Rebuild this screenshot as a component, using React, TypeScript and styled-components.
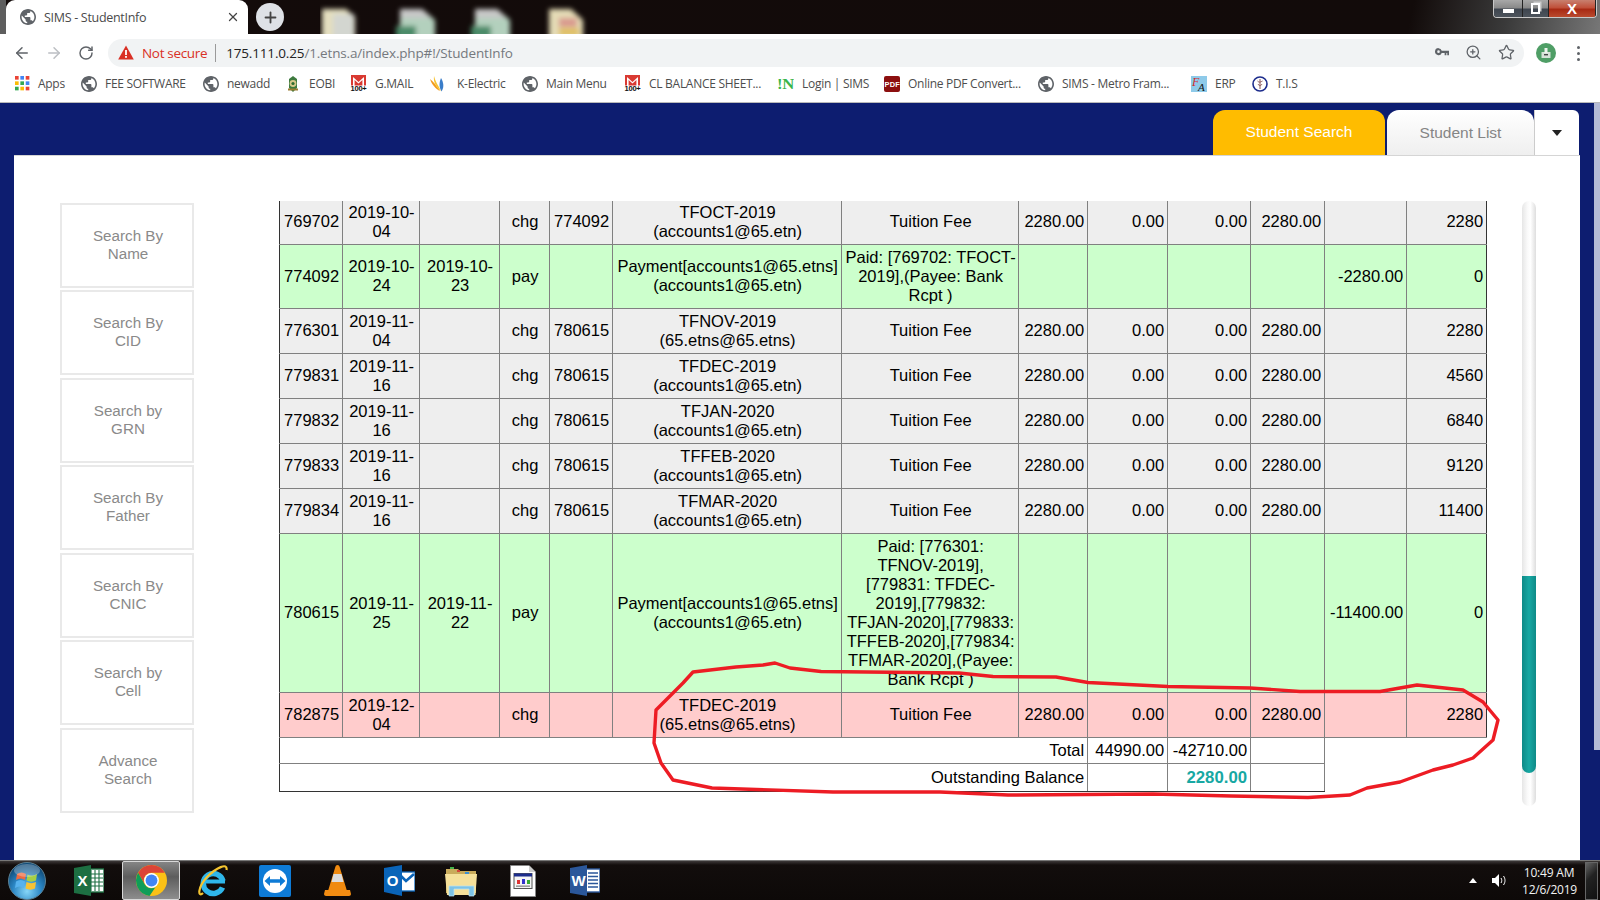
import React from "react";
import styled, { createGlobalStyle } from "styled-components";
import { ArrowLeft, ArrowRight, RotateCw, ZoomIn, Star, X, Plus } from "lucide-react";

const Global = createGlobalStyle`
  html, body { margin: 0; padding: 0; background: #fff; }
  * { box-sizing: border-box; }
`;

const Page = styled.div`
  width: 1600px; height: 900px; overflow: hidden; display: flex; flex-direction: column; position: relative;
  font-family: "Liberation Sans", Arial, sans-serif;
`;

/* ---------- browser chrome ---------- */
const TabStrip = styled.div`
  height: 34px; display: flex; align-items: flex-start; flex: none;
  background: linear-gradient(102deg, #130b0a 0%, #120b0a 88%, #3a3a3a 94%, #777 100%);
`;
const EdgeGrey = styled.div`width: 6px; height: 34px; background: #5e5e5e;`;
const BrowserTab = styled.div`
  width: 242px; height: 34px; background: #fff; border-radius: 9px 9px 0 0; display: flex; align-items: center;
  padding: 0 8px 0 14px; gap: 8px; color: #4a4a4a;
  font: 12.5px "Open Sans", sans-serif; letter-spacing: -0.3px;
`;
const TabTitle = styled.span`flex: 1; white-space: nowrap;`;
const NewTabButton = styled.div`
  width: 28px; height: 28px; border-radius: 50%; background: #dee1e6; margin: 3px 0 0 8px; display: flex;
  align-items: center; justify-content: center; color: #444;
`;
const BlurSvg = styled.svg`margin-left: 36px; flex: none;`;
const WindowControls = styled.div`
  margin-left: auto; margin-right: 3px; width: 104px; height: 18px; display: flex; border: 1px solid #c8c8c8; border-top: 0;
  border-radius: 0 0 4px 4px; overflow: hidden;
`;
const WinBtn = styled.div<{ $w: number; $red?: boolean }>`
  width: ${p => p.$w}px; display: flex; align-items: center; justify-content: center; color: #fff;
  border-right: 1px solid #222;
  background: ${p => p.$red
    ? "linear-gradient(#c8806f 0%, #c0503a 45%, #a82a14 55%, #b94a2e 100%)"
    : "linear-gradient(#a8a8a8 0%, #8a8a8a 45%, #3f4650 55%, #4d545c 100%)"};
`;
const MinGlyph = styled.div`width: 11px; height: 4px; background: #fff; margin-top: 4px;`;
const MaxGlyph = styled.div`
  width: 9px; height: 11px; border: 2px solid #fff; box-shadow: 2px -2px 0 -0.5px #ccc;
`;
const CloseGlyph = styled.span`font: bold 15px "Liberation Sans", sans-serif; color: #fff; line-height: 1;`;

const Toolbar = styled.div`
  height: 34px; background: #fff; display: flex; align-items: center; flex: none;
`;
const NavIcon = styled.div<{ $w: number; $c?: string }>`
  width: ${p => p.$w}px; margin-top: 3px; display: flex; justify-content: center; color: ${p => p.$c || "#5f6368"};
`;
const Omnibox = styled.div`
  width: 1416px; height: 28px; border-radius: 14px; background: #f1f3f4; display: flex; align-items: center;
  padding-left: 10px; font: 13.5px "Open Sans", sans-serif; letter-spacing: -0.33px; margin-top: 3px;
`;
const NotSecure = styled.span`color: #d93025; margin-left: 8px;`;
const Divider = styled.div`width: 1px; height: 18px; background: #9a9a9a; margin: 0 10px 0 8px;`;
const UrlHost = styled.span`color: #222; letter-spacing: -0.16px;`;
const UrlRest = styled.span`color: #75797e; letter-spacing: -0.16px;`;
const OmniRight = styled.div`margin-left: auto; display: flex; align-items: center; gap: 16px; padding-right: 9px; color: #5f6368;`;
const Avatar = styled.div`margin-left: 12px; display: flex; margin-top: 4px;`;
const Dots = styled.div`
  margin-left: 21px; margin-top: 4px; display: flex; flex-direction: column; gap: 3px;
  & > i { display: block; width: 3px; height: 3px; border-radius: 50%; background: #5f6368; }
`;

const BookmarkBar = styled.div`
  height: 35px; background: #fff; border-bottom: 1px solid #b9b9b9; display: flex; align-items: center; flex: none; padding: 0 0 3px 15px;
`;
const Bookmark = styled.div<{ $w: number }>`
  width: ${p => p.$w}px; flex: none; display: flex; align-items: center; gap: 8px; white-space: nowrap;
  font: 12px "Open Sans", sans-serif; letter-spacing: -0.28px; color: #4d4d4d;
`;

/* ---------- application ---------- */
const Main = styled.div`
  flex: 1; display: flex; min-height: 0;
  background: #0d1d70;
`;
const MainColumn = styled.div`width: 1594px; display: flex; flex-direction: column;`;
const SideStrip = styled.div`width: 6px; background: linear-gradient(#b4bbd6 0, #b4bbd6 647px, #0d1d70 647px);`;
const TabsRow = styled.div`
  height: 52px; padding: 7px 15px 0 0; display: flex; justify-content: flex-end; flex: none; font-size: 15.5px;
`;
const SearchTab = styled.div`
  width: 172px; background: #ffbc00; color: #fff; border-radius: 12px 12px 0 0; display: flex; align-items: center; justify-content: center; padding-bottom: 2px;
`;
const ListTab = styled.div`
  width: 147px; margin-left: 2px; background: linear-gradient(#fff, #efefef); color: #858585; border-radius: 12px 12px 0 0; display: flex;
  align-items: center; justify-content: center; padding-top: 1px;
`;
const CaretTab = styled.div`
  width: 45px; background: #fff; border-left: 1px solid #ccc; border-radius: 0 6px 0 0; display: flex; align-items: center; justify-content: center;
  &::after { content: ""; border: 5.5px solid transparent; border-top: 6px solid #222; border-bottom: 0; }
`;
const Panel = styled.div`
  flex: 1; margin-left: 14px; width: 1566px; background: #fff; border-top: 1px solid #d5d5d5; display: flex; padding-top: 45px; min-height: 0;
`;
const Sidebar = styled.div`
  margin-left: 46px; margin-top: 2px; width: 134px; display: flex; flex-direction: column; gap: 2.45px; flex: none;
`;
const SearchButton = styled.div`
  height: 85px; border: 2px solid #e9e9e9; color: #8a8a8a; font-size: 15.2px; line-height: 18px; text-align: center;
  display: flex; align-items: center; justify-content: center; padding: 0 21px 1px 23px;
`;
const TableViewport = styled.div`
  margin-left: 84.6px; width: 1208px; height: 605px; overflow: hidden; flex: none;
`;
const Ledger = styled.table`
  width: 1207px; margin-top: -2px; table-layout: fixed; border-collapse: collapse; font-size: 16.5px; line-height: 19px; color: #000;
`;
const Cell = styled.td<{ $a?: "l" | "c" | "r"; $nw?: boolean }>`
  border: 1px solid #808080; padding: 2.5px 2.5px 3.5px 4.5px;
  text-align: ${p => (p.$a === "r" ? "right" : p.$a === "l" ? "left" : "center")};
  ${p => (p.$nw ? "white-space: nowrap; padding-left: 3.5px; padding-right: 1.5px;" : "")}
  &:first-child { border-left-color: #333; }
  &:last-child { border-right-color: #333; }
`;
const Row = styled.tr<{ $k: "g" | "p" | "r" }>`
  background: ${p => (p.$k === "g" ? "#eeeeee" : p.$k === "p" ? "#ccffcc" : "#ffcccc")};
`;
const SumCell = styled.td<{ $last?: boolean }>`
  border: 1px solid #808080; padding: 3px 2.5px 3px 4.5px; text-align: right; background: #fff;
  &:first-child { border-left-color: #333; }
  ${p => p.$last ? "border-bottom-color: #333; padding-top: 4px; padding-bottom: 4px;" : ""}
`;
const OutstandingValue = styled.b`color: #17a8a3; font-size: 16.8px;`;
const ScrollTrack = styled.div`
  margin-left: 35.5px; width: 13.5px; height: 605px; border-radius: 7px; overflow: hidden; flex: none; margin-top: 0;
  background: linear-gradient(90deg, #e6e6e6, #fafafa 40%, #fff 60%, #dedede);
`;
const ScrollThumb = styled.div`
  margin-top: 375px; height: 197px; background: linear-gradient(90deg, #0e8a87, #17a8a3 50%, #0e8a87); border-radius: 0 0 7px 7px;
`;

/* ---------- taskbar ---------- */
const Taskbar = styled.div`
  height: 40px; flex: none; display: flex; align-items: center; color: #fff; border-top: 1px solid #777;
  background: linear-gradient(#3c3838 0, #120d0c 4px, #0d0908 100%);
`;
const StartSlot = styled.div`width: 58px; display: flex; justify-content: center; margin-left: -2px;`;
const TaskSlot = styled.div<{ $active?: boolean; $first?: boolean }>`
  width: 58px; height: 39px; margin: 0 2px 0 ${p => (p.$first ? "4px" : "2px")}; display: flex; align-items: center; justify-content: center;
  ${p => p.$active ? "background: linear-gradient(#858585, #5d5d5d 40%, #8d8d8d); border: 1px solid #d8d8d8; border-radius: 2px;" : ""}
`;
const Tray = styled.div`margin-left: auto; display: flex; align-items: center;`;
const TrayUp = styled.div`
  border: 4px solid transparent; border-bottom: 5px solid #fff; border-top: 0; margin-right: 15px;
`;
const Clock = styled.div`
  font: 12px/17px "Open Sans", sans-serif; letter-spacing: -0.2px; text-align: center; margin-left: 15px; width: 54px; color: #f3f3f3;
`;
const ShowDesktop = styled.div`
  width: 13px; height: 38px; margin: 0 2px 0 9px; border: 1px solid #666; background: linear-gradient(135deg, #666, #222 40%, #111);
`;
const AnnotationLayer = styled.svg`position: absolute; left: 0; top: 0; pointer-events: none;`;

/* ---------- drawings ---------- */
const Globe = ({ s = 16 }: { s?: number }) => (
  <svg width={s} height={s} viewBox="2 2 20 20" fill="#5f6368">
    <path d="M12 2C6.48 2 2 6.48 2 12s4.48 10 10 10 10-4.48 10-10S17.52 2 12 2zm-1 17.93c-3.95-.49-7-3.85-7-7.93 0-.62.08-1.21.21-1.79L9 15v1c0 1.1.9 2 2 2v1.93zm6.9-2.54c-.26-.81-1-1.39-1.9-1.39h-1v-3c0-.55-.45-1-1-1H8v-2h2c.55 0 1-.45 1-1V7h2c1.1 0 2-.9 2-2v-.41c2.93 1.19 5 4.06 5 7.41 0 2.08-.8 3.97-2.1 5.39z" />
  </svg>
);
const AppsGrid = () => {
  const c = ["#ea4335", "#4285f4", "#ea4335", "#fbbc05", "#34a853", "#4285f4", "#34a853", "#fbbc05", "#ea4335"];
  return (
    <svg width="15" height="15" viewBox="0 0 14 14">
      {c.map((f, i) => <rect key={i} x={(i % 3) * 5} y={Math.floor(i / 3) * 5} width="3.4" height="3.4" fill={f} />)}
    </svg>
  );
};
const Warn = () => (
  <svg width="16" height="15" viewBox="0 0 16 15">
    <path d="M8 0.5 L15.8 14.5 H0.2 Z" fill="#d93025" />
    <rect x="7.1" y="5" width="1.8" height="5" fill="#fff" /><rect x="7.1" y="11" width="1.8" height="1.8" fill="#fff" />
  </svg>
);
const KeyIcon = () => (
  <svg width="14" height="9" viewBox="0 0 16 10" fill="#5f6368">
    <path d="M4 0a4 4 0 1 0 3.7 5.5H11V8h2V5.5h1V8h2V3H7.7A4 4 0 0 0 4 0zm0 2.5a1.5 1.5 0 1 1 0 3 1.5 1.5 0 0 1 0-3z" />
  </svg>
);
const ProfileIcon = () => (
  <svg width="20" height="20" viewBox="0 0 20 20">
    <circle cx="10" cy="10" r="10" fill="#4f9e66" />
    <rect x="5.5" y="9" width="9" height="6" fill="#d6e2d8" />
    <rect x="8.5" y="5" width="3" height="5" fill="#eef3ee" /><rect x="8" y="11" width="4" height="1.4" fill="#444" />
  </svg>
);
const GmailBadge = () => (
  <svg width="17" height="18" viewBox="0 0 17 18">
    <path d="M1 0h15v11H1z" fill="#d93a32" />
    <path d="M3 2 L8.5 7 L14 2 V11 H12.4 V5 L8.5 8.6 L4.6 5 V11 H3 Z" fill="#fff" />
    <rect x="0" y="10.5" width="17" height="7.5" fill="#fff" />
    <text x="8.5" y="16.4" textAnchor="middle" fontSize="7.6" fontWeight="bold" fontFamily="Liberation Sans" fill="#111" textLength="16">100+</text>
  </svg>
);
const EobiIcon = () => (
  <svg width="16" height="16" viewBox="0 0 16 16">
    <path d="M8 0 L12 3 V12 L8 16 L4 12 V3Z" fill="#3d7a3e" />
    <circle cx="8" cy="7.5" r="3.4" fill="#d7c88a" /><circle cx="8" cy="7.5" r="1.6" fill="#2e6b2f" />
    <rect x="3" y="12.5" width="10" height="2" fill="#9a7d33" />
  </svg>
);
const KElectricIcon = () => (
  <svg width="20" height="17" viewBox="0 0 20 17">
    <path d="M1 4 C4 6 7 10 11 16 C7 14 3 10 1 4Z" fill="#f39a1e" />
    <path d="M5 1 C6 6 9 10 12 16 C8 13 4 8 5 1Z" fill="#f7c331" />
    <path d="M12 3 C10 8 10 12 12.5 16.5 C15 13 15 8 12 3Z" fill="#3a7dc9" />
  </svg>
);
const LoginIcon = () => (
  <svg width="17" height="19" viewBox="0 0 17 19">
    <text x="0" y="15" fontSize="15" fontWeight="bold" fontFamily="Liberation Serif" fill="#39b54a" textLength="17" lengthAdjust="spacingAndGlyphs">!N</text>
  </svg>
);
const PdfIcon = () => (
  <svg width="16" height="16" viewBox="0 0 16 16">
    <rect width="16" height="16" rx="2" fill="#8c0f0f" />
    <text x="8" y="11.2" textAnchor="middle" fontSize="7.4" fontWeight="bold" fontFamily="Liberation Sans" fill="#fff" textLength="15">PDF</text>
  </svg>
);
const FaIcon = () => (
  <svg width="16" height="16" viewBox="0 0 16 16">
    <rect width="16" height="16" fill="#8ecae9" />
    <text x="1" y="10" fontSize="12" fontStyle="italic" fontFamily="Liberation Serif" fill="#d4282c">F</text>
    <text x="7" y="15" fontSize="11" fontStyle="italic" fontFamily="Liberation Serif" fill="#111">A</text>
  </svg>
);
const TisIcon = () => (
  <svg width="16" height="16" viewBox="0 0 16 16">
    <circle cx="8" cy="8" r="7" fill="#fff" stroke="#1c2c8c" strokeWidth="1.6" />
    <path d="M8 3v10M5.5 5c2 2 3 1 5 0M6 8c1 2 3 2 4 0" stroke="#885555" strokeWidth="1" fill="none" />
  </svg>
);
const WindowsOrb = () => (
  <svg width="38" height="38" viewBox="0 0 38 38">
    <defs>
      <radialGradient id="orb" cx="50%" cy="78%" r="70%">
        <stop offset="0" stopColor="#86d6f8" /><stop offset="0.55" stopColor="#2b86c4" /><stop offset="1" stopColor="#0f4a78" />
      </radialGradient>
    </defs>
    <circle cx="19" cy="19" r="18.5" fill="url(#orb)" stroke="#5b7f92" />
    <path d="M9 12 C12 10 15 10 18 12 L17 18 C14 16 11 16 8 18Z" fill="#ee6a40" />
    <path d="M19.5 12.5 C22 14 25 14 29 12 L28 18.5 C25 20 21.5 20 18.5 18.5Z" fill="#a6cf45" />
    <path d="M8 19.5 C11 17.5 14 17.5 17 19.5 L16 26 C13 24 10 24 7 26Z" fill="#57b2ee" />
    <path d="M18.5 20 C21.5 21.5 25 21.5 28 20 L27 26.5 C24 28 20.5 28 17.5 26.5Z" fill="#f7c233" />
    <ellipse cx="19" cy="8.5" rx="13" ry="6.5" fill="#fff" opacity="0.28" />
  </svg>
);
const ExcelIcon = () => (
  <svg width="30" height="31" viewBox="0 0 30 31">
    <rect x="13" y="4" width="17" height="23" fill="#fff" stroke="#1d6f42" strokeWidth="1.4" />
    <path d="M17 5v21M21 5v21M25 5v21M14 9h15M14 13h15M14 17h15M14 21h15" stroke="#1d6f42" strokeWidth="1.1" />
    <path d="M0 3 L17 0 V31 L0 28Z" fill="#1d6f42" />
    <text x="8.5" y="21" textAnchor="middle" fontSize="15" fontWeight="bold" fontFamily="Liberation Sans" fill="#fff">X</text>
  </svg>
);
const ChromeIcon = () => (
  <svg width="31" height="31" viewBox="-15.5 -15.5 31 31">
    <circle r="15.5" fill="#fbc116" />
    <path d="M-13.4 -7.75 A15.5 15.5 0 0 1 13.4 -7.75 L0 -7.75 A7.75 7.75 0 0 0 -6.7 3.9 Z" fill="#db4437" />
    <path d="M-13.4 -7.75 L-6.7 3.9 A7.75 7.75 0 0 0 3.9 6.7 L-2 15.4 A15.5 15.5 0 0 1 -13.4 -7.75Z" fill="#0f9d58" />
    <circle r="7.4" fill="#fff" /><circle r="5.9" fill="#4285f4" />
  </svg>
);
const IeIcon = () => (
  <svg width="30" height="32" viewBox="0 0 30 32">
    <path d="M24.5 22.5 A10 10 0 1 1 25 16" fill="none" stroke="#2fb6ea" strokeWidth="5.5" />
    <path d="M7 16.5 H27" stroke="#2fb6ea" strokeWidth="4" />
    <path d="M5 28 C0 33 -1 23 9 12 C18 3 30 -3 28.5 5" fill="none" stroke="#f4c430" strokeWidth="2.2" />
  </svg>
);
const TeamViewerIcon = () => (
  <svg width="32" height="32" viewBox="0 0 32 32">
    <rect width="32" height="32" rx="2" fill="#0e7bd6" />
    <circle cx="16" cy="16" r="12" fill="#fff" />
    <path d="M5.5 16 L11 11 V14.3 H21 V11 L26.5 16 L21 21 V17.7 H11 V21Z" fill="#0e7bd6" />
  </svg>
);
const VlcIcon = () => (
  <svg width="27" height="31" viewBox="0 0 27 31">
    <path d="M13.5 0 C15 0 15.5 1 16 3 L23 26 H4 L11 3 C11.5 1 12 0 13.5 0Z" fill="#f08a10" />
    <path d="M9.5 9 H17.5 L19.5 17 H7.5Z" fill="#dcdcdc" />
    <path d="M1 25 H26 L27 29 C27 30 26 31 25 31 H2 C1 31 0 30 0 29Z" fill="#f28c12" />
  </svg>
);
const OutlookIcon = () => (
  <svg width="31" height="31" viewBox="0 0 31 31">
    <rect x="14" y="7" width="17" height="19" fill="#fff" stroke="#0a64b8" strokeWidth="1.3" />
    <path d="M15 9 L22 16 L30 9" fill="none" stroke="#0a64b8" strokeWidth="2.6" />
    <path d="M0 3 L18 0 V31 L0 27Z" fill="#0a64b8" />
    <text x="8.5" y="21" textAnchor="middle" fontSize="15" fontWeight="bold" fontFamily="Liberation Sans" fill="#fff">O</text>
  </svg>
);
const ExplorerIcon = () => (
  <svg width="32" height="32" viewBox="0 0 32 32">
    <path d="M1 4 H13 L15 6 H31 V28 H1Z" fill="#c9ab5b" />
    <rect x="5" y="2" width="4" height="2" fill="#43b14b" /><rect x="12" y="5" width="3" height="2" fill="#d5453a" /><rect x="20" y="7" width="4" height="2" fill="#3b8fd1" />
    <path d="M0 9 H32 L30.5 30 H2Z" fill="#f5e09a" />
    <path d="M4 21 H29 V31 H24 V24 H9 V31 H4Z" fill="#7dc3e6" stroke="#bfe4f4" strokeWidth="0.7" />
  </svg>
);
const DocAppIcon = () => (
  <svg width="26" height="32" viewBox="0 0 26 32">
    <path d="M0.5 0.5 H19 L25.5 7 V31.5 H0.5Z" fill="#fff" stroke="#888" />
    <path d="M19 0.5 V7 H25.5Z" fill="#ccc" />
    <rect x="4" y="8.5" width="18" height="15" fill="#f5f5f5" stroke="#555" />
    <rect x="4" y="8.5" width="18" height="3" fill="#1c2c8c" />
    <rect x="7" y="15" width="3" height="4" fill="#d33" /><rect x="12" y="14" width="3" height="5" fill="#33c" /><rect x="17" y="15" width="3" height="4" fill="#3a3" />
    <rect x="6" y="20.5" width="14" height="1.3" fill="#888" />
  </svg>
);
const WordIcon = () => (
  <svg width="30" height="31" viewBox="0 0 30 31">
    <rect x="13" y="4" width="17" height="23" fill="#fff" stroke="#2b579a" strokeWidth="1.4" />
    <path d="M18 8h10M18 11.5h10M18 15h10M18 18.5h10M18 22h10" stroke="#2b579a" strokeWidth="1.5" />
    <path d="M0 3 L17 0 V31 L0 28Z" fill="#2b579a" />
    <text x="8.5" y="21" textAnchor="middle" fontSize="15" fontWeight="bold" fontFamily="Liberation Sans" fill="#fff">W</text>
  </svg>
);
const SpeakerIcon = () => (
  <svg width="15" height="15" viewBox="0 0 15 15" fill="none">
    <path d="M0 5 H3 L7 1 V14 L3 10 H0Z" fill="#fff" />
    <path d="M9 5 C10 6.5 10 8.5 9 10M11.5 3 C13.5 6 13.5 9 11.5 12" stroke="#fff" strokeWidth="1" />
  </svg>
);
const DesktopBlur = () => (
  <BlurSvg width="280" height="34" viewBox="0 0 280 34">
    <defs><filter id="b" x="-30%" y="-30%" width="160%" height="160%"><feGaussianBlur stdDeviation="2.4" /></filter></defs>
    <g filter="url(#b)">
      <path d="M2 9 H26 L35 17 V40 H2Z" fill="#e4dfbf" /><rect x="13" y="14" width="21" height="26" fill="#d3d6d0" />
      <path d="M80 9 H102 L115 20 V40 H80Z" fill="#b3d0bd" /><path d="M80 9 H102 L112 18 H80Z" fill="#c8c8c8" /><rect x="76" y="26" width="20" height="12" fill="#4a8a68" />
      <path d="M155 9 H177 L190 20 V40 H155Z" fill="#b3d0bd" /><path d="M155 9 H177 L187 18 H155Z" fill="#c8c8c8" /><rect x="151" y="26" width="20" height="12" fill="#4a8a68" />
      <path d="M229 9 H251 L263 20 V40 H229Z" fill="#e4dbb6" /><rect x="239" y="18" width="18" height="9" fill="#d99a8e" /><rect x="239" y="28" width="20" height="8" fill="#e0c060" />
    </g>
  </BlurSvg>
);

/* ---------- data ---------- */
type Rec = { id: string; d1: string; d2?: string; t: string; ref?: string; a: string; b: string; p: React.ReactNode; nw?: boolean; fee?: boolean; pay?: string; bal: string; k: "g" | "p" | "r" };
const rows: Rec[] = [
  { id: "769702", d1: "2019-10-04", t: "chg", ref: "774092", a: "TFOCT-2019", b: "(accounts1@65.etn)", p: "Tuition Fee", fee: true, bal: "2280", k: "g" },
  { id: "774092", d1: "2019-10-24", d2: "2019-10-23", t: "pay", a: "Payment[accounts1@65.etns]", b: "(accounts1@65.etn)", nw: true, p: <>Paid: [769702: TFOCT-<br />2019],(Payee: Bank<br />Rcpt )</>, pay: "-2280.00", bal: "0", k: "p" },
  { id: "776301", d1: "2019-11-04", t: "chg", ref: "780615", a: "TFNOV-2019", b: "(65.etns@65.etns)", p: "Tuition Fee", fee: true, bal: "2280", k: "g" },
  { id: "779831", d1: "2019-11-16", t: "chg", ref: "780615", a: "TFDEC-2019", b: "(accounts1@65.etn)", p: "Tuition Fee", fee: true, bal: "4560", k: "g" },
  { id: "779832", d1: "2019-11-16", t: "chg", ref: "780615", a: "TFJAN-2020", b: "(accounts1@65.etn)", p: "Tuition Fee", fee: true, bal: "6840", k: "g" },
  { id: "779833", d1: "2019-11-16", t: "chg", ref: "780615", a: "TFFEB-2020", b: "(accounts1@65.etn)", p: "Tuition Fee", fee: true, bal: "9120", k: "g" },
  { id: "779834", d1: "2019-11-16", t: "chg", ref: "780615", a: "TFMAR-2020", b: "(accounts1@65.etn)", p: "Tuition Fee", fee: true, bal: "11400", k: "g" },
  { id: "780615", d1: "2019-11-25", d2: "2019-11-22", t: "pay", a: "Payment[accounts1@65.etns]", b: "(accounts1@65.etn)", p: "Paid: [776301: TFNOV-2019],[779831: TFDEC-2019],[779832: TFJAN-2020],[779833: TFFEB-2020],[779834: TFMAR-2020],(Payee: Bank Rcpt )", pay: "-11400.00", bal: "0", k: "p" },
  { id: "782875", d1: "2019-12-04", t: "chg", a: "TFDEC-2019", b: "(65.etns@65.etns)", p: "Tuition Fee", fee: true, bal: "2280", k: "r" },
];
const widths = [63, 77, 80, 50, 63, 229, 177, 69, 80, 83, 74, 82, 80];
const searches = [["Search By", "Name"], ["Search By", "CID"], ["Search by", "GRN"], ["Search By", "Father"], ["Search By", "CNIC"], ["Search by", "Cell"], ["Advance", "Search"]];
const marks: [number, React.ReactNode, string][] = [
  [66, <AppsGrid />, "Apps"], [122, <Globe />, "FEE SOFTWARE"], [82, <Globe />, "newadd"], [65, <EobiIcon />, "EOBI"],
  [79, <GmailBadge />, "G.MAIL"], [93, <KElectricIcon />, "K-Electric"], [102, <Globe />, "Main Menu"],
  [153, <GmailBadge />, "CL BALANCE SHEET..."], [107, <LoginIcon />, "Login | SIMS"], [154, <PdfIcon />, "Online PDF Convert..."],
  [153, <Globe />, "SIMS - Metro Fram..."], [61, <FaIcon />, "ERP"], [60, <TisIcon />, "T.I.S"],
];
const annotation = "M1380 691.5 L1300 691.5 L1250 688 L1168 686.5 L1088 682.5 L1056 677 L993 676.5 L959 673 L821 671.5 L790 668 L775 663 L763 665 L736 667 L693 672 L683 683 L656 710 L654 743 L661 763 L673 780 L712 788 L833 792 L940 792 L1008 795 L1153 794 L1231 796 L1308 797.5 L1350 795 L1367 788 L1400 782 L1433 770 L1453 765 L1473 758 L1493 740 L1498 720 L1483 702 L1463 690 L1417 685 L1380 691.5";

export default function App() {
  return (
    <Page>
      <Global />
      <TabStrip>
        <EdgeGrey />
        <BrowserTab>
          <Globe />
          <TabTitle>SIMS - StudentInfo</TabTitle>
          <X size={14} strokeWidth={2.2} color="#444" />
        </BrowserTab>
        <NewTabButton><Plus size={17} strokeWidth={2.6} /></NewTabButton>
        <DesktopBlur />
        <WindowControls>
          <WinBtn $w={30}><MinGlyph /></WinBtn>
          <WinBtn $w={26}><MaxGlyph /></WinBtn>
          <WinBtn $w={48} $red><CloseGlyph>X</CloseGlyph></WinBtn>
        </WindowControls>
      </TabStrip>
      <Toolbar>
        <NavIcon $w={44}><ArrowLeft size={18} strokeWidth={2} /></NavIcon>
        <NavIcon $w={20} $c="#bcbfc3"><ArrowRight size={18} strokeWidth={2} /></NavIcon>
        <NavIcon $w={44}><RotateCw size={16} strokeWidth={2.2} /></NavIcon>
        <Omnibox>
          <Warn />
          <NotSecure>Not secure</NotSecure>
          <Divider />
          <UrlHost>175.111.0.25</UrlHost><UrlRest>/1.etns.a/index.php#!/StudentInfo</UrlRest>
          <OmniRight>
            <KeyIcon />
            <ZoomIn size={17} strokeWidth={1.8} />
            <Star size={17} strokeWidth={1.8} />
          </OmniRight>
        </Omnibox>
        <Avatar><ProfileIcon /></Avatar>
        <Dots><i /><i /><i /></Dots>
      </Toolbar>
      <BookmarkBar>
        {marks.map(([w, ic, t]) => <Bookmark key={t} $w={w}>{ic}<span>{t}</span></Bookmark>)}
      </BookmarkBar>
      <Main>
        <MainColumn>
          <TabsRow>
            <SearchTab>Student Search</SearchTab>
            <ListTab>Student List</ListTab>
            <CaretTab />
          </TabsRow>
          <Panel>
            <Sidebar>
              {searches.map(([a, b], i) => <SearchButton key={i}><span>{a}<br />{b}</span></SearchButton>)}
            </Sidebar>
            <TableViewport>
              <Ledger>
                <colgroup>{widths.map((w, i) => <col key={i} width={w} />)}</colgroup>
                <tbody>
                  {rows.map(r => (
                    <Row key={r.id} $k={r.k}>
                      <Cell $a="l">{r.id}</Cell>
                      <Cell>{r.d1}</Cell>
                      <Cell>{r.d2}</Cell>
                      <Cell>{r.t}</Cell>
                      <Cell>{r.ref}</Cell>
                      <Cell>{r.a}<br />{r.b}</Cell>
                      <Cell $nw={r.nw}>{r.p}</Cell>
                      <Cell $a="r">{r.fee ? "2280.00" : ""}</Cell>
                      <Cell $a="r">{r.fee ? "0.00" : ""}</Cell>
                      <Cell $a="r">{r.fee ? "0.00" : ""}</Cell>
                      <Cell $a="r">{r.fee ? "2280.00" : ""}</Cell>
                      <Cell $a="r">{r.pay}</Cell>
                      <Cell $a="r">{r.bal}</Cell>
                    </Row>
                  ))}
                  <tr>
                    <SumCell colSpan={8}>Total</SumCell>
                    <SumCell>44990.00</SumCell>
                    <SumCell>-42710.00</SumCell>
                    <SumCell />
                  </tr>
                  <tr>
                    <SumCell colSpan={8} $last>Outstanding Balance</SumCell>
                    <SumCell $last />
                    <SumCell $last><OutstandingValue>2280.00</OutstandingValue></SumCell>
                    <SumCell $last />
                  </tr>
                </tbody>
              </Ledger>
            </TableViewport>
            <ScrollTrack><ScrollThumb /></ScrollTrack>
          </Panel>
        </MainColumn>
        <SideStrip />
      </Main>
      <Taskbar>
        <StartSlot><WindowsOrb /></StartSlot>
        <TaskSlot $first><ExcelIcon /></TaskSlot>
        <TaskSlot $active><ChromeIcon /></TaskSlot>
        <TaskSlot><IeIcon /></TaskSlot>
        <TaskSlot><TeamViewerIcon /></TaskSlot>
        <TaskSlot><VlcIcon /></TaskSlot>
        <TaskSlot><OutlookIcon /></TaskSlot>
        <TaskSlot><ExplorerIcon /></TaskSlot>
        <TaskSlot><DocAppIcon /></TaskSlot>
        <TaskSlot><WordIcon /></TaskSlot>
        <Tray>
          <TrayUp />
          <SpeakerIcon />
          <Clock>10:49 AM<br />12/6/2019</Clock>
          <ShowDesktop />
        </Tray>
      </Taskbar>
      <AnnotationLayer width="1600" height="900" viewBox="0 0 1600 900">
        <path d={annotation} fill="none" stroke="#ed1c24" strokeWidth="3.4" strokeLinejoin="round" strokeLinecap="round" />
      </AnnotationLayer>
    </Page>
  );
}
